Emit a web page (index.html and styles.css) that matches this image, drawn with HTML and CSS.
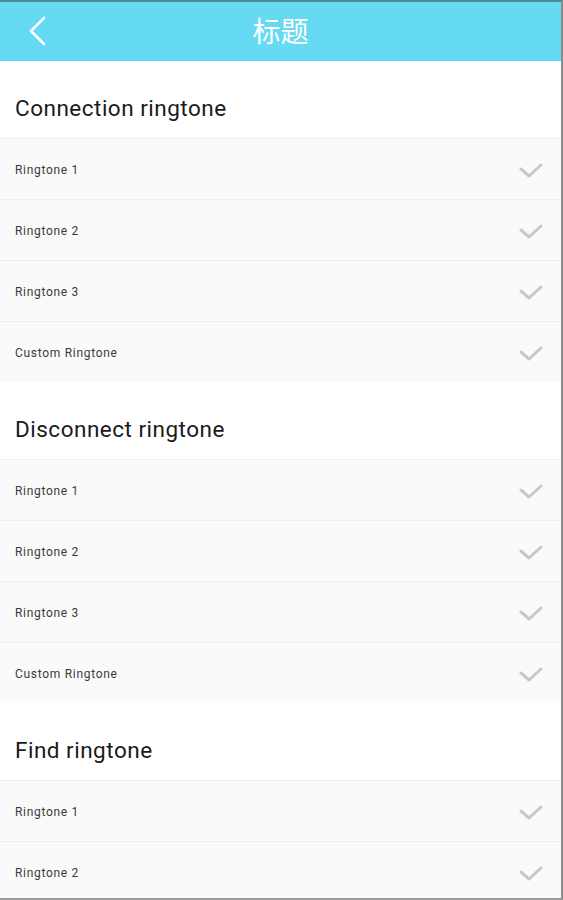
FILE: index.html
```html
<!DOCTYPE html>
<html lang="zh">
<head>
  <meta charset="UTF-8" />
  <meta name="viewport" content="width=device-width, initial-scale=1.0" />
  <title>标题</title>
  <link rel="stylesheet" href="styles.css">
</head>
<body>
  <div class="frame">
    <div class="topbar">
      <svg class="back" width="20" height="30" viewBox="0 0 20 30">
        <path d="M16 2 L3 15 L16 28" fill="none" stroke="#fff" stroke-width="2.6" stroke-linecap="round" stroke-linejoin="round"/>
      </svg>
      <div class="topbar-title">标题</div>
    </div>

    <div class="section">
      <div class="section-title">Connection ringtone</div>
      <div class="row"><span>Ringtone 1</span><svg class="check" width="24" height="16" viewBox="0 0 24 16"><path d="M2 7 L10 14 L22 3"/></svg></div>
      <div class="row"><span>Ringtone 2</span><svg class="check" width="24" height="16" viewBox="0 0 24 16"><path d="M2 7 L10 14 L22 3"/></svg></div>
      <div class="row"><span>Ringtone 3</span><svg class="check" width="24" height="16" viewBox="0 0 24 16"><path d="M2 7 L10 14 L22 3"/></svg></div>
      <div class="row"><span>Custom Ringtone</span><svg class="check" width="24" height="16" viewBox="0 0 24 16"><path d="M2 7 L10 14 L22 3"/></svg></div>
    </div>

    <div class="section">
      <div class="section-title">Disconnect ringtone</div>
      <div class="row"><span>Ringtone 1</span><svg class="check" width="24" height="16" viewBox="0 0 24 16"><path d="M2 7 L10 14 L22 3"/></svg></div>
      <div class="row"><span>Ringtone 2</span><svg class="check" width="24" height="16" viewBox="0 0 24 16"><path d="M2 7 L10 14 L22 3"/></svg></div>
      <div class="row"><span>Ringtone 3</span><svg class="check" width="24" height="16" viewBox="0 0 24 16"><path d="M2 7 L10 14 L22 3"/></svg></div>
      <div class="row"><span>Custom Ringtone</span><svg class="check" width="24" height="16" viewBox="0 0 24 16"><path d="M2 7 L10 14 L22 3"/></svg></div>
    </div>

    <div class="section">
      <div class="section-title">Find ringtone</div>
      <div class="row"><span>Ringtone 1</span><svg class="check" width="24" height="16" viewBox="0 0 24 16"><path d="M2 7 L10 14 L22 3"/></svg></div>
      <div class="row"><span>Ringtone 2</span><svg class="check" width="24" height="16" viewBox="0 0 24 16"><path d="M2 7 L10 14 L22 3"/></svg></div>
    </div>
  </div>
</body>
</html>
```

FILE: styles.css
```css
body {
  margin: 0;
  font-family: Roboto, "Noto Sans CJK SC", sans-serif;
  background: #fff;
  color: #222;
}
.frame {
  height: 900px;
  box-sizing: border-box;
  overflow: hidden;
  border-top: 2px solid #4a8c9a;
  border-right: 2px solid #8c8c8c;
  border-bottom: 2px solid #9a9a9a;
  background: #fafafa;
}
.topbar {
  height: 59px;
  background: #66daf3;
  display: flex;
  align-items: center;
  justify-content: center;
  position: relative;
}
.back {
  position: absolute;
  left: 28px;
  top: 14px;
}
.topbar-title {
  color: #fff;
  font-size: 28px;
  font-family: "Noto Sans CJK SC", sans-serif;
  margin-top: -3px;
}
.section-title {
  height: 77px;
  box-sizing: border-box;
  padding: 34px 0 0 15px;
  font-size: 22.5px;
  letter-spacing: 0.5px;
  line-height: 26px;
  color: #1a1a1a;
  background: #fff;
}
.row {
  height: 61px;
  box-sizing: border-box;
  border-top: 1px solid #eeeeee;
  background: #fafafa;
  display: flex;
  align-items: center;
  justify-content: space-between;
  padding: 2px 18px 0 15px;
  font-size: 12px;
  letter-spacing: 0.7px;
  color: #3a3a3a;
}
.check path {
  fill: none;
  stroke: #c8c8c8;
  stroke-width: 3;
  stroke-linecap: round;
  stroke-linejoin: round;
}
```
